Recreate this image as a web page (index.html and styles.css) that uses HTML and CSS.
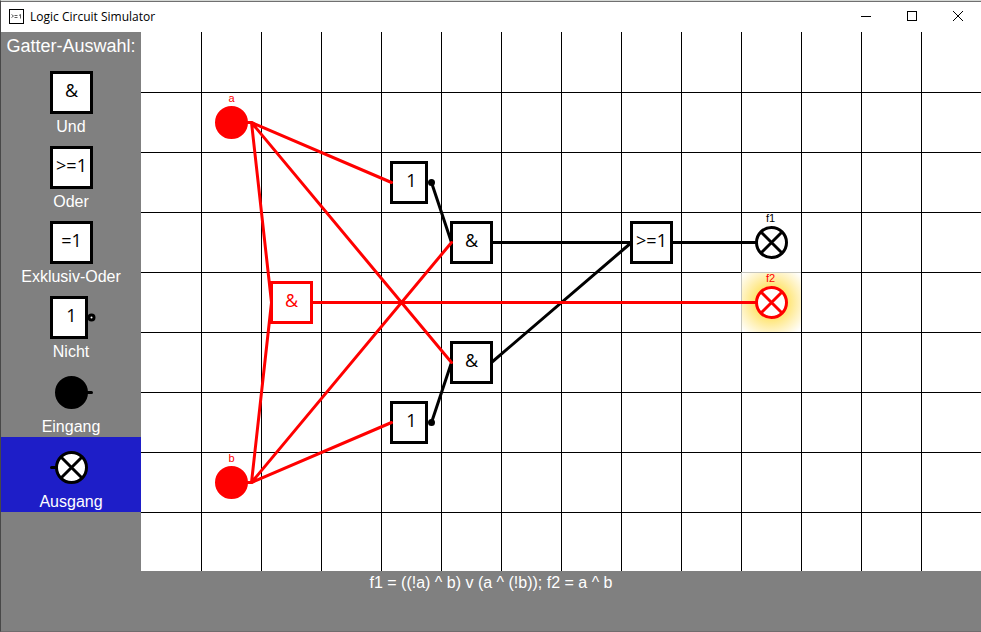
FILE: index.html
```
<!DOCTYPE html>
<html lang="de">
<head>
<meta charset="utf-8">
<title>Logic Circuit Simulator</title>
<link rel="stylesheet" href="styles.css">
</head>
<body>
<div class="window">
  <header class="titlebar">
    <svg class="app-icon" width="15" height="15" viewBox="0 0 15 15" aria-hidden="true">
      <rect x=".5" y=".5" width="14" height="14" fill="#fff" stroke="#000"/>
      <path d="M2.500 5.500l2 1.500-2 1.500M5.500 6.500h3M5.500 8.500h3M10 6.500l1.500-1v4" fill="none" stroke="#333" stroke-width=".8"/>
    </svg>
    <h1 class="title">Logic Circuit Simulator</h1>
    <div class="window-controls">
      <button class="control" aria-label="Minimieren"><svg width="10" height="10"><path d="M0 5.500h10" stroke="#000"/></svg></button>
      <button class="control" aria-label="Maximieren"><svg width="10" height="10"><rect x=".5" y=".5" width="9" height="9" fill="none" stroke="#000"/></svg></button>
      <button class="control" aria-label="Schließen"><svg width="10" height="10"><path d="M0 0l10 10M10 0L0 10" stroke="#000"/></svg></button>
    </div>
  </header>

  <main class="workspace">
    <nav class="palette" aria-label="Gatter-Auswahl">
      <h2 class="palette-title">Gatter-Auswahl:</h2>
      <button class="tool">
        <svg class="symbol" viewBox="-30.500 -30.500 60 60"><g class="gate"><rect x="-20" y="-20" width="40" height="40"/><text x="0" y="4">&amp;</text></g></svg>
        <span>Und</span>
      </button>
      <button class="tool">
        <svg class="symbol" viewBox="-30.500 -30.500 60 60"><g class="gate"><rect x="-20" y="-20" width="40" height="40"/><text x="0" y="4">&gt;=1</text></g></svg>
        <span>Oder</span>
      </button>
      <button class="tool">
        <svg class="symbol" viewBox="-30.500 -30.500 60 60"><g class="gate"><rect x="-20" y="-20" width="40" height="40"/><text x="0" y="4">=1</text></g></svg>
        <span>Exklusiv-Oder</span>
      </button>
      <button class="tool">
        <svg class="symbol" viewBox="-30.500 -30.500 60 60"><g class="gate"><rect x="-20" y="-20" width="35" height="40"/><circle cx="20" cy="0" r="2.500"/><text x="0" y="4">1</text></g></svg>
        <span>Nicht</span>
      </button>
      <button class="tool">
        <svg class="symbol" viewBox="-30.500 -30.500 60 60"><g class="source"><circle r="15"/><path d="M15 0h5"/></g></svg>
        <span>Eingang</span>
      </button>
      <button class="tool selected">
        <svg class="symbol" viewBox="-30.500 -30.500 60 60"><g class="lamp"><circle r="15"/><path d="M-20 0h5M-10 -10L10 10M10 -10L-10 10"/></g></svg>
        <span>Ausgang</span>
      </button>
    </nav>

    <svg class="board" role="img" aria-label="Schaltplan">
      <defs>
        <pattern id="rows" width="60" height="60" patternUnits="userSpaceOnUse">
          <rect width="60" height="1"/>
        </pattern>
        <pattern id="columns" width="60" height="60" patternUnits="userSpaceOnUse">
          <rect width="1" height="60"/>
        </pattern>
        <radialGradient id="glow" gradientUnits="userSpaceOnUse" cx="630" cy="270" r="40">
          <stop offset="0" stop-color="#ffe050"/>
          <stop offset=".42" stop-color="#ffe678"/>
          <stop offset=".7" stop-color="#fff2bc"/>
          <stop offset="1" stop-color="#fff"/>
        </radialGradient>
      </defs>
      <rect y="1" width="100%" height="100%" fill="url(#rows)"/>
      <rect x="1" width="100%" height="100%" fill="url(#columns)"/>
      <rect x="600" y="240" width="60" height="60" fill="url(#glow)"/>
      <path d="M600 240h60v1h-59v59h-1z" fill="#c4c4bc"/>
      <g transform="translate(.5 .5)">
        <g class="source on" transform="translate(90 90)"><circle r="15"/><path d="M15 0h5"/><text class="name" x="0" y="-21">a</text></g>
        <g class="source on" transform="translate(90 450)"><circle r="15"/><path d="M15 0h5"/><text class="name" x="0" y="-21">b</text></g>
        <g class="gate" transform="translate(270 150)"><rect x="-20" y="-20" width="35" height="40"/><circle cx="20" cy="0" r="2"/><text x="0" y="4">1</text></g>
        <g class="gate" transform="translate(270 390)"><rect x="-20" y="-20" width="35" height="40"/><circle cx="20" cy="0" r="2"/><text x="0" y="4">1</text></g>
        <g class="gate" transform="translate(330 210)"><rect x="-20" y="-20" width="40" height="40"/><text x="0" y="4">&amp;</text></g>
        <g class="gate" transform="translate(330 330)"><rect x="-20" y="-20" width="40" height="40"/><text x="0" y="4">&amp;</text></g>
        <g class="gate on" transform="translate(150 270)"><rect x="-20" y="-20" width="40" height="40"/><text x="0" y="4">&amp;</text></g>
        <g class="gate" transform="translate(510 210)"><rect x="-20" y="-20" width="40" height="40"/><text x="0" y="4">&gt;=1</text></g>
        <g class="lamp" transform="translate(630 210)"><circle r="15"/><path d="M-20 0h5M-10 -10L10 10M10 -10L-10 10"/><text class="name" x="-1" y="-21">f1</text></g>
        <g class="lamp on" transform="translate(630 270)"><circle r="15"/><path d="M-20 0h5M-10 -10L10 10M10 -10L-10 10"/><text class="name" x="-1" y="-21">f2</text></g>
        <path class="wire" d="M290 150L310 210M290 390L310 330M350 210H490M350 330L490 210M530 210H615"/>
        <path class="wire on" d="M110 90L250 150M110 90L310 330M110 90L130 270M110 450L250 390M110 450L310 210M110 450L130 270M170 270H615"/>
      </g>
    </svg>
  </main>

  <footer class="formula"><output>f1 = ((!a) ^ b) v (a ^ (!b)); f2 = a ^ b</output></footer>
</div>
</body>
</html>
```
FILE: styles.css
```
* { box-sizing: border-box; }

body {
  margin: 0;
  font-family: "Liberation Sans", Arial, sans-serif;
  background: #808080;
}

.window {
  display: flex;
  flex-direction: column;
  min-height: 100vh;
  border-top: 1px solid #d5d8d5;
  border-left: 1px solid #484848;
  border-bottom: 1px solid #706c6e;
}

.titlebar {
  display: flex;
  align-items: center;
  height: 31px;
  padding: 0 0 2px 8px;
  border-top: 1px solid #707070;
  background: #fff;
}

.app-icon { margin-right: 6px; }

.title {
  margin: 0;
  font: 400 12px "Open Sans", "Noto Sans", sans-serif;
  color: #000;
}

.window-controls { display: flex; margin-left: auto; }

.control {
  display: grid;
  place-items: center;
  width: 46px;
  height: 28px;
  padding: 0;
  border: 0;
  background: none;
}

.workspace {
  display: flex;
  flex: 1;
}

.palette {
  width: 140px;
  flex: none;
  background: #808080;
  color: #fff;
}

.palette-title {
  margin: 0;
  padding-bottom: 2px;
  font-size: 18px;
  font-weight: 400;
  line-height: 28px;
  text-align: center;
  white-space: nowrap;
}

.tool {
  display: flex;
  flex-direction: column;
  align-items: center;
  width: 100%;
  height: 75px;
  padding: 0;
  border: 0;
  background: none;
  color: inherit;
  font-family: inherit;
  font-size: 16px;
  line-height: 18px;
}

.tool.selected { background: #1e1ec8; }

.symbol {
  width: 60px;
  height: 60px;
  flex: none;
  margin-bottom: -4px;
}

.board {
  flex: 1;
  min-width: 0;
  min-height: 539px;
  background: #fff;
}

.gate, .source, .lamp { stroke: #000; stroke-width: 3px; fill: #fff; }
.source { fill: #000; }
.lamp path, .source path { stroke-linecap: round; }

.gate.on, .source.on, .lamp.on { stroke: #f00; }
.source.on { fill: #f00; }

.gate text {
  stroke: none;
  fill: #000;
  font: 18px "Open Sans", "Noto Sans", sans-serif;
  text-anchor: middle;
}

.gate.on text { fill: #f00; }

.name {
  stroke: none;
  fill: #000;
  font-size: 11px;
  text-anchor: middle;
}

.on .name { fill: #f00; }

.wire {
  fill: none;
  stroke: #000;
  stroke-width: 3px;
  stroke-linecap: round;
}

.wire.on { stroke: #f00; }

.formula {
  height: 60px;
  padding-top: 3px;
  background: #808080;
  color: #fff;
  font-size: 16px;
  line-height: 18px;
  text-align: center;
}
```
